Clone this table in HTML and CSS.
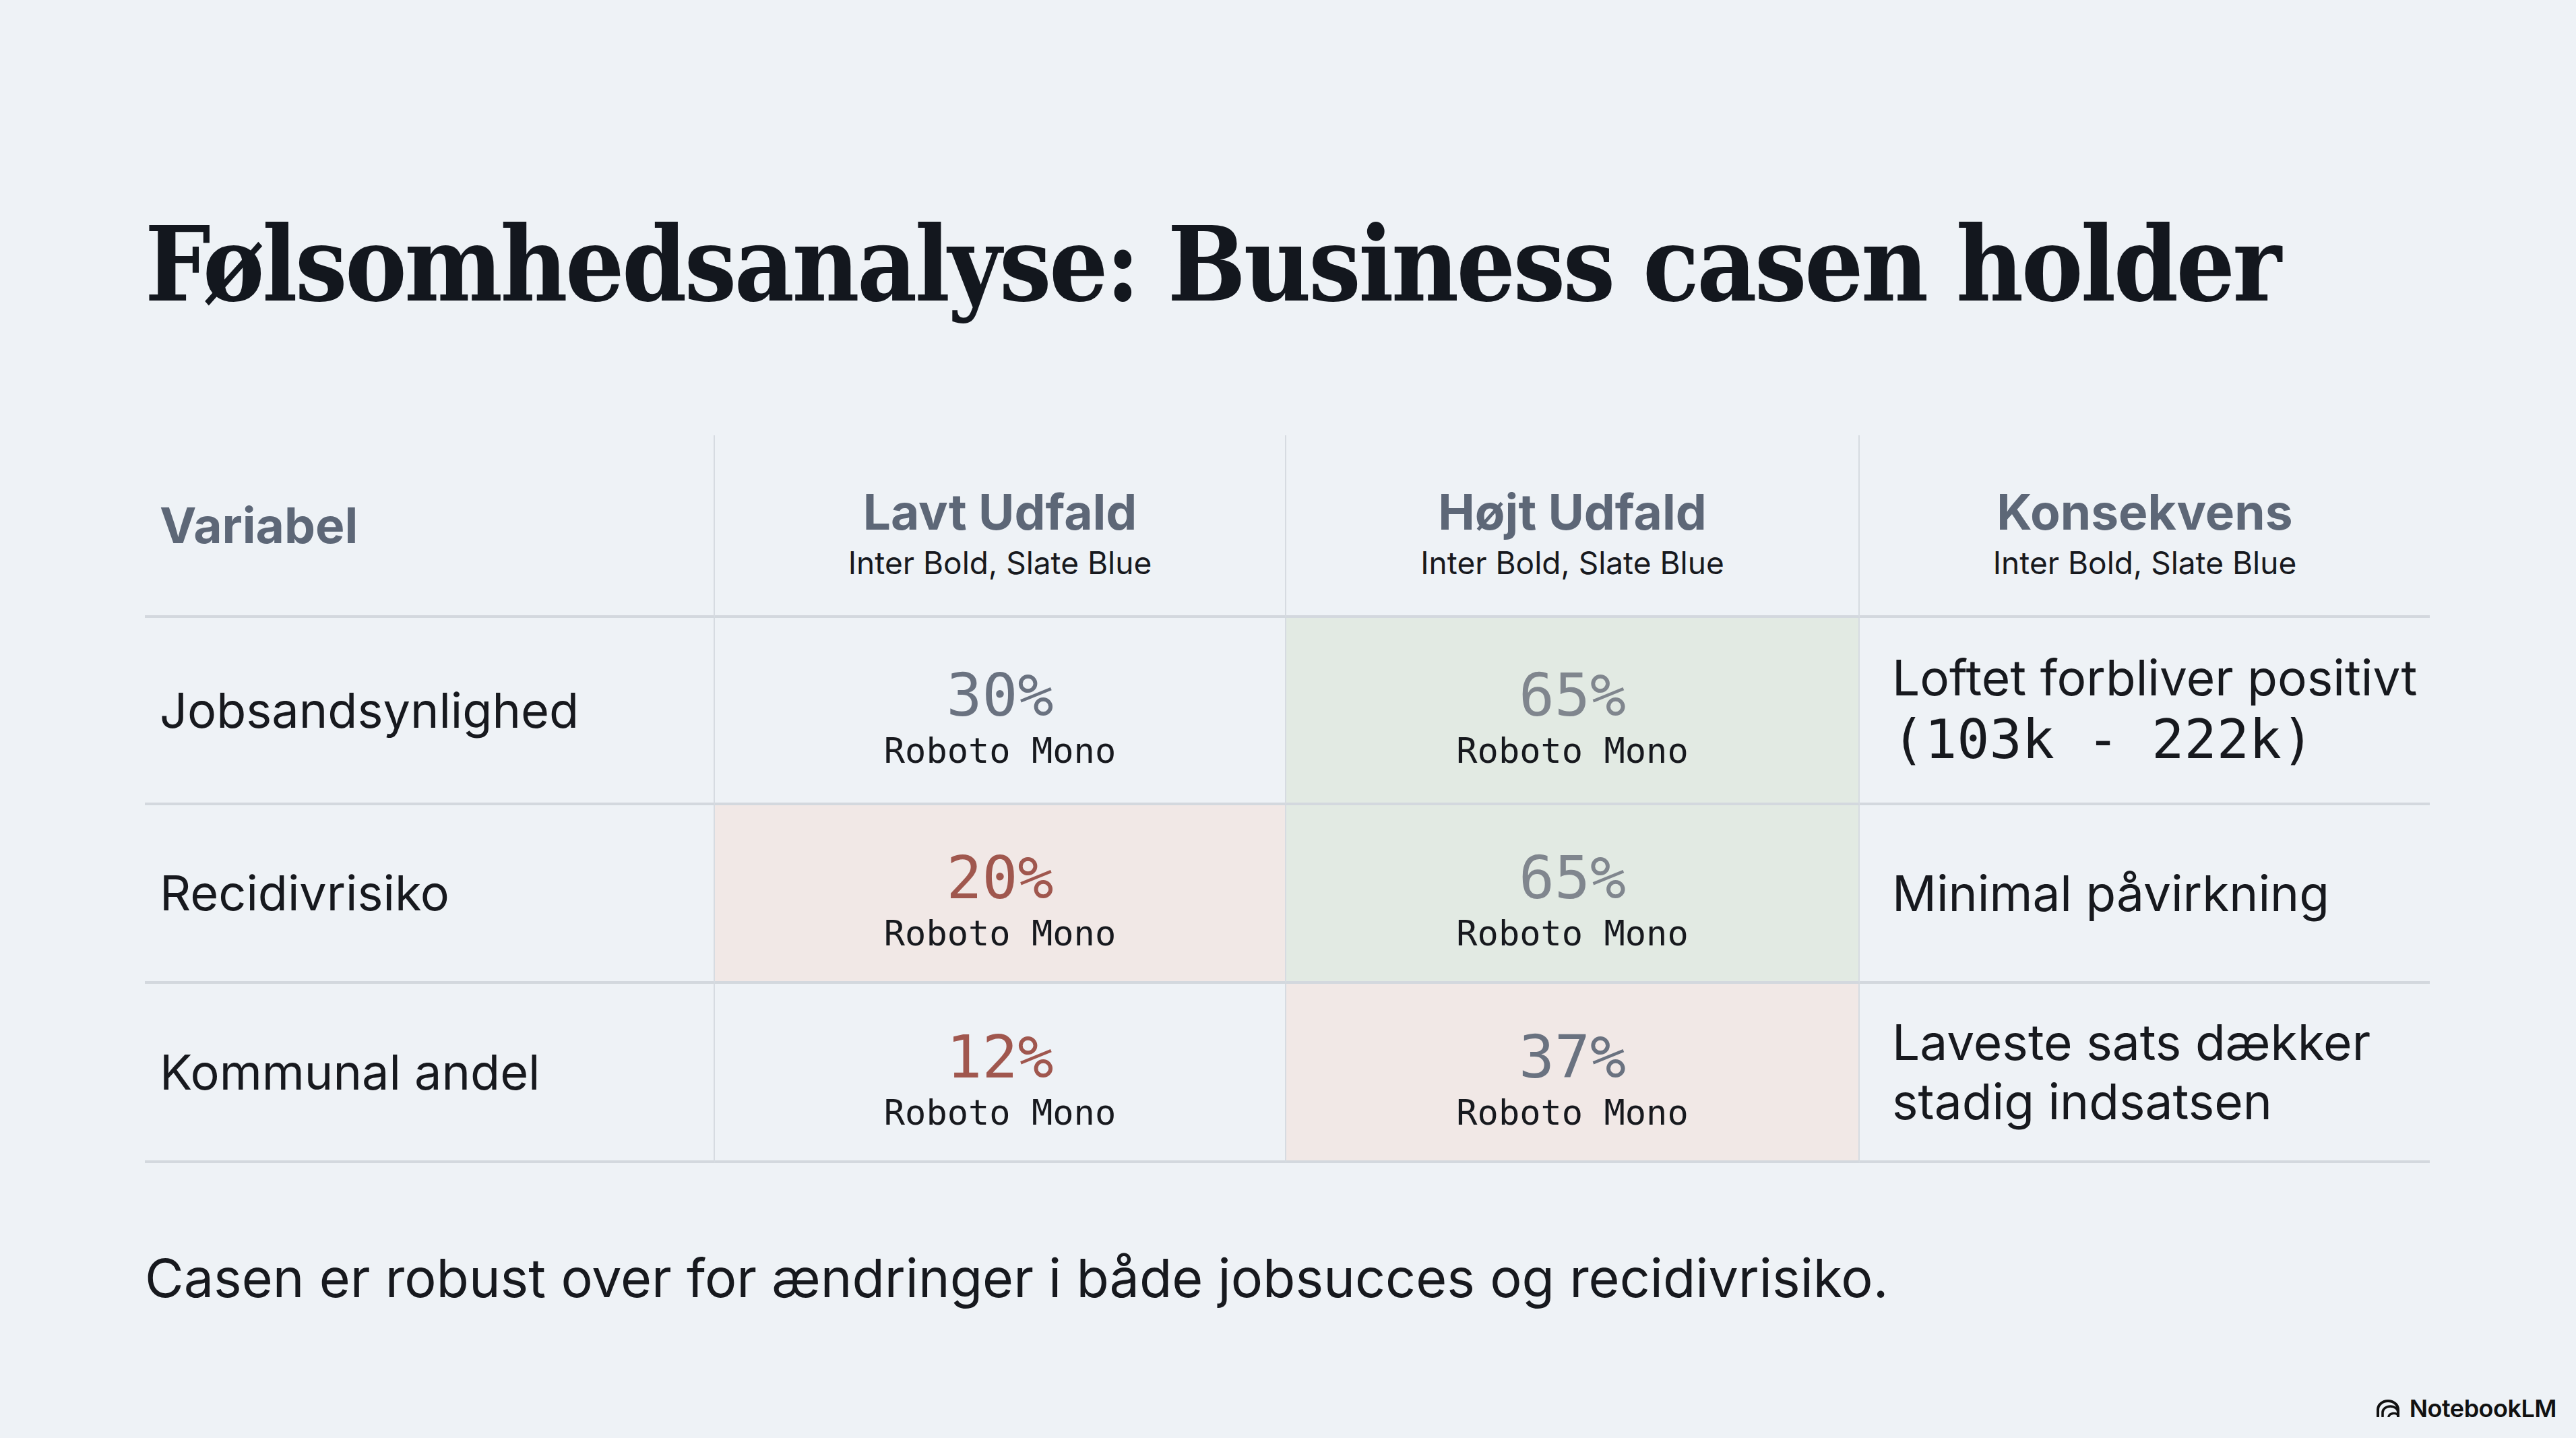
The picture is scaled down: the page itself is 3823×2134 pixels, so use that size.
FILE: index.html
```html
<!DOCTYPE html>
<html lang="da">
<head>
<meta charset="utf-8">
<title>Følsomhedsanalyse</title>
<link rel="stylesheet" href="styles.css">
</head>
<body>
<main class="slide">
  <h1 class="title">Følsomhedsanalyse: Business casen holder</h1>

  <div class="table">
    <div class="cell head label"><span class="h-main">Variabel</span></div>
    <div class="cell head mid"><span class="h-main">Lavt Udfald</span><span class="h-sub">Inter Bold, Slate Blue</span></div>
    <div class="cell head mid"><span class="h-main">Højt Udfald</span><span class="h-sub">Inter Bold, Slate Blue</span></div>
    <div class="cell head mid last"><span class="h-main">Konsekvens</span><span class="h-sub">Inter Bold, Slate Blue</span></div>

    <div class="cell label"><span class="row-name">Jobsandsynlighed</span></div>
    <div class="cell mid"><span class="pct grey">30%</span><span class="mono-cap">Roboto Mono</span></div>
    <div class="cell mid good"><span class="pct light">65%</span><span class="mono-cap">Roboto Mono</span></div>
    <div class="cell effect last"><span class="effect-text">Loftet forbliver positivt</span><span class="effect-mono">(103k - 222k)</span></div>

    <div class="cell label"><span class="row-name">Recidivrisiko</span></div>
    <div class="cell mid bad"><span class="pct red">20%</span><span class="mono-cap">Roboto Mono</span></div>
    <div class="cell mid good"><span class="pct light">65%</span><span class="mono-cap">Roboto Mono</span></div>
    <div class="cell effect last"><span class="effect-text">Minimal påvirkning</span></div>

    <div class="cell label"><span class="row-name">Kommunal andel</span></div>
    <div class="cell mid"><span class="pct red">12%</span><span class="mono-cap">Roboto Mono</span></div>
    <div class="cell mid bad"><span class="pct grey">37%</span><span class="mono-cap">Roboto Mono</span></div>
    <div class="cell effect last"><span class="effect-text">Laveste sats dækker<br>stadig indsatsen</span></div>
  </div>

  <p class="summary">Casen er robust over for ændringer i både jobsucces og recidivrisiko.</p>

  <div class="brand">
    <svg class="brand-icon" viewBox="0 0 36 26" aria-hidden="true">
      <path d="M3 25 V15 A15 13 0 0 1 33 15 V25" fill="none" stroke="#111" stroke-width="4" stroke-linecap="round"/>
      <path d="M10 25 V19 A11.5 9 0 0 1 33 19" fill="none" stroke="#111" stroke-width="3.6" stroke-linecap="round"/>
      <path d="M19 25 A8 6.5 0 0 1 33 23" fill="none" stroke="#111" stroke-width="3.4" stroke-linecap="round"/>
    </svg>
    <span class="brand-name">NotebookLM</span>
  </div>
</main>
</body>
</html>
```

FILE: styles.css
```css
* { box-sizing: border-box; }

html, body {
  margin: 0;
  padding: 0;
}

body {
  width: 3823px;
  height: 2134px;
  background: #eef2f6;
  font-family: Inter, "Noto Sans", sans-serif;
  color: #16181d;
  overflow: hidden;
}

.slide {
  position: relative;
  width: 3823px;
  height: 2134px;
  padding: 313px 217px 0 215px;
}

.title {
  margin: 0;
  font-family: "DejaVu Serif Condensed", "DejaVu Serif", serif;
  font-stretch: condensed;
  font-weight: 700;
  font-size: 153px;
  line-height: 158px;
  color: #13171e;
  letter-spacing: -3.5px;
  white-space: nowrap;
}

.table {
  margin-top: 175px;
  display: grid;
  grid-template-columns: 846px 848px 851px 846px;
  grid-template-rows: 271px 278px 265px 266px;
}

.cell {
  display: flex;
  flex-direction: column;
  justify-content: center;
  border-right: 2px solid #d6dbe1;
  border-bottom: 4px solid #d3d8de;
}

.cell.last { border-right: none; }

.label { padding-left: 22px; align-items: flex-start; }
.mid { align-items: center; text-align: center; padding-top: 24px; }
.head.mid { padding-top: 22px; }
.effect { padding-left: 48px; align-items: flex-start; }

.good { background: #e2eae3; }
.bad { background: #f1e8e6; }

.h-main {
  font-weight: 700;
  font-size: 73px;
  line-height: 1.18;
  color: #5d6777;
}

.head.label .h-main { margin-top: 2px; }

.h-sub {
  font-size: 46px;
  line-height: 1.25;
  color: #17191e;
  margin-top: 4px;
}

.row-name {
  font-size: 72px;
  line-height: 1.2;
  color: #17191e;
}

.pct {
  font-family: "DejaVu Sans Mono", "Liberation Mono", monospace;
  font-size: 88px;
  line-height: 1.1;
}

.grey { color: #6a7280; }
.light { color: #80868e; }
.red { color: #a0574e; }

.mono-cap {
  font-family: "DejaVu Sans Mono", "Liberation Mono", monospace;
  font-size: 52px;
  line-height: 1.3;
  color: #17191e;
}

.effect-text {
  font-size: 73px;
  line-height: 1.2;
  color: #17191e;
}

.effect-mono {
  font-family: "DejaVu Sans Mono", "Liberation Mono", monospace;
  font-size: 80px;
  line-height: 1.2;
  color: #17191e;
  white-space: pre;
}

.summary {
  margin: 123px 0 0 0;
  font-size: 79px;
  line-height: 1.2;
  color: #17191e;
}

.brand {
  position: absolute;
  right: 29px;
  bottom: 26px;
  display: flex;
  align-items: center;
  gap: 14px;
}

.brand-icon {
  width: 36px;
  height: 26px;
}

.brand-name {
  font-weight: 600;
  font-size: 36px;
  line-height: 1;
  color: #111;
  letter-spacing: -0.5px;
}
```
